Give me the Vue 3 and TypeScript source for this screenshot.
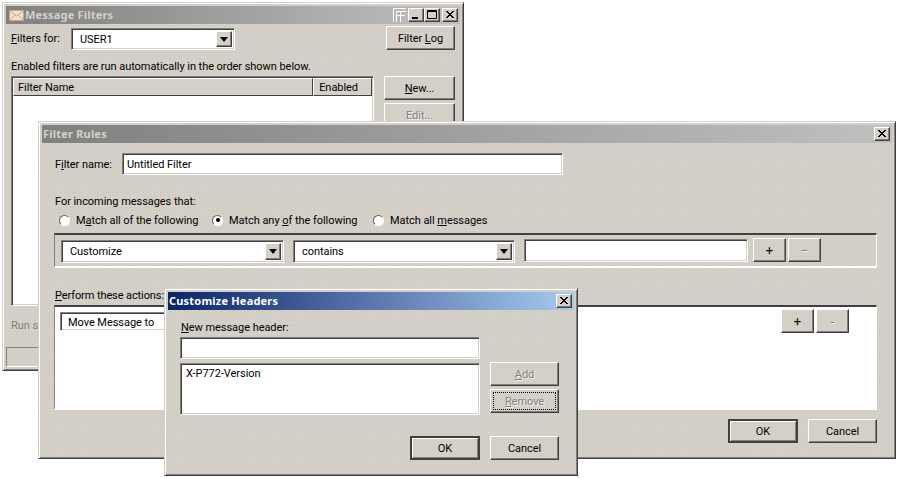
<script setup lang="ts">
const conditionRadios = [
  { pre: 'M', key: 'a', post: 'tch all of the following', on: false, w: 153 },
  { pre: 'Match any ', key: 'o', post: 'f the following', on: true, w: 161 },
  { pre: 'Match all ', key: 'm', post: 'essages', on: false, w: 120 },
]
</script>

<template>
  <div class="desk">
    <!-- Message Filters -->
    <section class="win w1">
      <header class="title inactive">
        <svg class="env" width="15" height="11" viewBox="0 0 15 11"><rect x="0.5" y="0.5" width="14" height="10" fill="#f0e0cc" stroke="#c8a888"/><path d="M1 1l6.500 5 6.500-5M1 10l5-5M14 10l-5-5" fill="none" stroke="#c8a888"/></svg>
        <span class="title-text">Message Filters</span>
        <span class="controls">
          <svg class="ff" width="13" height="14" viewBox="0 0 13 14"><path d="M.5 14V.5H13M3.500 14V3.500H7M3.500 7.500H7M7.500 14V3.500H13M7.500 7.500H12" fill="none" stroke="#fff"/></svg>
          <span class="ctl"><svg width="14" height="12" viewBox="0 0 14 12"><rect x="3" y="8" width="6" height="2" fill="#000"/></svg></span>
          <span class="ctl"><svg width="14" height="12" viewBox="0 0 14 12"><path d="M2.500 1.500h9v8h-9zM2 2.500h10" fill="none" stroke="#000"/></svg></span>
          <span class="ctl ctl-x"><svg width="14" height="12" viewBox="0 0 14 12"><path d="M3 2l7 7M4 2l7 7M10 2l-7 7M11 2l-7 7" stroke="#000"/></svg></span>
        </span>
      </header>
      <div class="w1-body">
        <div class="w1-top">
          <label class="w1-label"><u>F</u>ilters for:</label>
          <div class="sunken select w1-select">
            <span class="select-text">USER1</span>
            <span class="arrow"><svg width="8" height="5" viewBox="0 0 8 5"><path d="M0 0h8L4 5z" fill="#000"/></svg></span>
          </div>
          <button class="btn w1-log">Filter <u>L</u>og</button>
        </div>
        <p class="w1-note">Enabled filters are run automatically in the order shown below.</p>
        <div class="w1-main">
          <div class="sunken w1-list">
            <div class="list-head">
              <span class="col col-name">Filter Name</span>
              <span class="col col-enabled">Enabled</span>
            </div>
          </div>
          <div class="w1-side">
            <button class="btn w1-btn"><u>N</u>ew...</button>
            <button class="btn w1-btn disabled">Edit...</button>
          </div>
        </div>
        <p class="w1-run disabled-plain">Run s</p>
        <div class="w1-foot"></div>
      </div>
    </section>

    <!-- Filter Rules -->
    <section class="win w2">
      <header class="title inactive">
        <span class="title-text">Filter Rules</span>
        <span class="controls"><span class="ctl ctl-x"><svg width="14" height="12" viewBox="0 0 14 12"><path d="M3 2l7 7M4 2l7 7M10 2l-7 7M11 2l-7 7" stroke="#000"/></svg></span></span>
      </header>
      <div class="w2-body">
        <div class="w2-name">
          <label>F<u>i</u>lter name:</label>
          <div class="sunken input w2-name-input">Untitled Filter</div>
        </div>
        <p class="w2-for">For incoming messages that:</p>
        <div class="radios">
          <label v-for="r in conditionRadios" :key="r.key" class="radio" :style="{ width: r.w + 'px' }">
            <span class="dot" :class="{ on: r.on }"></span>
            <span>{{ r.pre }}<u>{{ r.key }}</u>{{ r.post }}</span>
          </label>
        </div>
        <div class="group cond">
          <div class="sunken select c-select">
            <span class="select-text">Customize</span>
            <span class="arrow"><svg width="8" height="5" viewBox="0 0 8 5"><path d="M0 0h8L4 5z" fill="#000"/></svg></span>
          </div>
          <div class="sunken select c-select c-second">
            <span class="select-text">contains</span>
            <span class="arrow"><svg width="8" height="5" viewBox="0 0 8 5"><path d="M0 0h8L4 5z" fill="#000"/></svg></span>
          </div>
          <div class="sunken c-input"></div>
          <button class="btn pm plus">+</button>
          <button class="btn pm minus disabled">−</button>
        </div>
        <p class="w2-perform"><u>P</u>erform these actions:</p>
        <div class="group act">
          <div class="sunken act-select">Move Message to</div>
          <div class="act-btns">
            <button class="btn pm">+</button>
            <button class="btn pm disabled">-</button>
          </div>
        </div>
        <div class="w2-foot">
          <button class="btn def w2-ok">OK</button>
          <button class="btn w2-cancel">Cancel</button>
        </div>
      </div>
    </section>

    <!-- Customize Headers -->
    <section class="win w3">
      <header class="title active">
        <span class="title-text">Customize Headers</span>
        <span class="controls"><span class="ctl ctl-x"><svg width="14" height="12" viewBox="0 0 14 12"><path d="M3 2l7 7M4 2l7 7M10 2l-7 7M11 2l-7 7" stroke="#000"/></svg></span></span>
      </header>
      <div class="w3-body">
        <div class="w3-left">
          <label class="w3-label"><u>N</u>ew message header:</label>
          <div class="sunken w3-input"></div>
          <div class="sunken w3-list">X-P772-Version</div>
        </div>
        <div class="w3-side">
          <button class="btn w3-btn disabled"><u>A</u>dd</button>
          <button class="btn w3-btn disabled focus"><u>R</u>emove</button>
        </div>
        <div class="w3-foot">
          <button class="btn def w3-ok">OK</button>
          <button class="btn w3-btn">Cancel</button>
        </div>
      </div>
    </section>
  </div>
</template>

<style>
html, body { margin: 0; background: #fff; }
</style>

<style scoped>
.desk {
  position: relative;
  width: 898px;
  height: 478px;
  overflow: hidden;
  background: #fff;
  font: 11px/13px Roboto, "Noto Sans", sans-serif;
  letter-spacing: -0.05px;
  color: #000;
}
p { margin: 0; }
u { text-decoration: underline; }

.win {
  position: absolute;
  box-sizing: border-box;
  display: flex;
  flex-direction: column;
  padding: 3px;
  border: 1px solid;
  border-color: #d4d0c8 #404040 #404040 #d4d0c8;
  box-shadow: inset 1px 1px 0 #fff, inset -1px -1px 0 #808080;
  background-color: #d4d0c8;
  background-image:
    radial-gradient(circle, #cbc8c0 0.5px, transparent 0.7px),
    radial-gradient(circle, #dbd3cb 0.5px, transparent 0.7px);
  background-size: 3px 3px, 5px 5px;
  background-position: 0 0, 1px 1px;
}
.w1 { left: 2px; top: 2px; width: 462px; height: 369px; }
.w2 { left: 38px; top: 121px; width: 858px; height: 338px; }
.w3 { left: 164px; top: 288px; width: 414px; height: 188px; }

.title {
  flex: none;
  height: 18px;
  display: flex;
  align-items: center;
  padding: 0 2px 0 1px;
  font-family: "Noto Sans", sans-serif;
  font-weight: bold;
  letter-spacing: 0.2px;
}
.title.inactive { background: linear-gradient(90deg, #808080, #c0c0c0); color: #d4d0c8; }
.title.active { background: linear-gradient(90deg, #0a246a, #a6caf0); color: #fff; }
.title-text { flex: 1; white-space: nowrap; padding-bottom: 2px; }
.w1 .title { padding-left: 3px; }
.env { margin-right: 1px; flex: none; }
.controls { display: flex; align-items: center; gap: 0; }
.ff { margin-right: 2px; }
.ctl {
  box-sizing: border-box;
  width: 16px;
  height: 14px;
  display: flex;
  align-items: center;
  justify-content: center;
  background: #d4d0c8;
  border: 1px solid;
  border-color: #fff #404040 #404040 #fff;
  box-shadow: inset -1px -1px 0 #808080;
}
.ctl svg { flex: none; }
.ctl-x { margin-left: 2px; }

.btn {
  box-sizing: border-box;
  display: block;
  margin: 0;
  padding: 0;
  font: inherit;
  letter-spacing: inherit;
  color: #000;
  background: #d4d0c8;
  border: 1px solid;
  border-color: #fff #404040 #404040 #fff;
  box-shadow: inset -1px -1px 0 #808080;
  text-align: center;
  height: 24px;
}
.btn.def {
  border: 2px solid #404040;
  box-shadow: inset 1px 1px 0 #fff, inset -1px -1px 0 #808080;
}
.btn.disabled, .disabled-plain { color: #808080; }
.btn.disabled { text-shadow: 1px 1px 0 #f4f2ee; }
.btn.focus { outline: 1px dotted #000; outline-offset: -4px; }

.sunken {
  box-sizing: border-box;
  background: #fff;
  border: 1px solid;
  border-color: #808080 #fff #fff #808080;
  box-shadow: inset 1px 1px 0 #404040, inset -1px -1px 0 #d4d0c8;
}
.select { display: flex; align-items: stretch; padding: 2px; }
.select-text { flex: 1; padding: 2px 0 0 6px; }
.arrow {
  box-sizing: border-box;
  flex: none;
  width: 16px;
  display: flex;
  align-items: center;
  justify-content: center;
  background: #d4d0c8;
  border: 1px solid;
  border-color: #fff #404040 #404040 #fff;
  box-shadow: inset -1px -1px 0 #808080;
}
.input { padding: 4px; white-space: nowrap; }

/* Message Filters */
.w1-body { padding: 2px 5px 0 5px; display: flex; flex-direction: column; flex: 1; min-height: 0; }
.w1-top { display: flex; align-items: flex-start; height: 24px; }
.w1-label { width: 60px; margin-top: 6px; }
.w1-select { width: 164px; height: 22px; margin-top: 2px; }
.w1-log { width: 69px; margin-left: auto; }
.w1-note { margin-top: 10px; height: 13px; }
.w1-main { display: flex; gap: 10px; margin-top: 3px; }
.w1-list { width: 363px; height: 230px; padding: 1px; }
.list-head { display: flex; height: 18px; line-height: 18px; }
.col {
  box-sizing: border-box;
  background: #d4d0c8;
  border: 1px solid;
  border-color: #fff #404040 #404040 #fff;
  padding-left: 4px;
}
.col-name { width: 301px; }
.col-enabled { width: 59px; padding-left: 5px; }
.w1-side { display: flex; flex-direction: column; gap: 3px; width: 71px; }
.w1-btn { width: 71px; }
.w1-run { margin-top: 13px; height: 13px; }
.w1-foot {
  margin-top: 15px;
  height: 20px;
  margin-left: -5px;
  border: 1px solid;
  border-color: #808080 #fff #fff #808080;
}

/* Filter Rules */
.w2-body { padding: 10px 15px 0 12px; flex: 1; display: flex; flex-direction: column; min-height: 0; }
.w2-name { display: flex; align-items: center; height: 22px; padding-left: 1px; }
.w2-name label { width: 67px; padding-top: 1px; }
.w2-name-input { width: 441px; height: 22px; }
.w2-for { margin-top: 20px; padding-left: 1px; height: 12px; }
.radios { display: flex; margin-top: 6px; padding-left: 5px; height: 14px; }
.radio { display: flex; align-items: center; gap: 6px; white-space: nowrap; flex: none; }
.dot {
  box-sizing: border-box;
  position: relative;
  flex: none;
  width: 11px;
  height: 11px;
  border-radius: 50%;
  background: #fff;
  border: 1px solid;
  border-color: #606060 #fff #fff #606060;
}
.dot.on::after {
  content: "";
  position: absolute;
  left: 2.500px;
  top: 2.500px;
  width: 4px;
  height: 4px;
  border-radius: 50%;
  background: #000;
}
.group {
  box-sizing: border-box;
  border: 1px solid;
  border-color: #404040 #fff #fff #808080;
  border-top-width: 2px;
  border-bottom-width: 2px;
}
.cond {
  display: flex;
  align-items: flex-start;
  width: 823px;
  height: 35px;
  margin-top: 6px;
  padding: 3px 0 0 6px;
}
.c-select { width: 223px; height: 23px; margin-top: 2px; }
.c-second { margin-left: 9px; width: 222px; }
.c-input { width: 224px; height: 23px; margin: 1px 0 0 9px; }
.pm { width: 33px; font-size: 13px; }
.plus { margin-left: 5px; }
.minus { margin-left: 2px; }
.w2-perform { margin-top: 21px; padding-left: 1px; height: 13px; letter-spacing: -0.1px; white-space: nowrap; width: 109px; }
.act {
  position: relative;
  width: 823px;
  height: 105px;
  margin-top: 3px;
  background: #fff;
  padding: 5px 0 0 5px;
}
.act-select { width: 130px; height: 19px; padding: 3px 7px; white-space: nowrap; }
.act-btns { position: absolute; right: 27px; top: 2px; display: flex; gap: 2px; }
.w2-foot { display: flex; justify-content: flex-end; gap: 10px; margin-top: 9px; width: 823px; }
.w2-ok { width: 70px; }
.w2-cancel { width: 69px; }

/* Customize Headers */
.w3-body {
  flex: 1;
  display: grid;
  grid-template-columns: 300px 69px;
  column-gap: 10px;
  grid-template-rows: auto auto;
  padding: 11px 0 0 12px;
  align-content: start;
}
.w3-label { display: block; height: 13px; padding-left: 1px; }
.w3-input { height: 22px; margin-top: 3px; }
.w3-list { height: 52px; margin-top: 4px; padding: 3px 5px; }
.w3-side { display: flex; flex-direction: column; gap: 3px; padding-top: 41px; }
.w3-btn { width: 69px; }
.w3-foot { grid-column: 1 / 3; display: flex; justify-content: flex-end; gap: 10px; margin-top: 21px; }
.w3-ok { width: 70px; }
</style>
